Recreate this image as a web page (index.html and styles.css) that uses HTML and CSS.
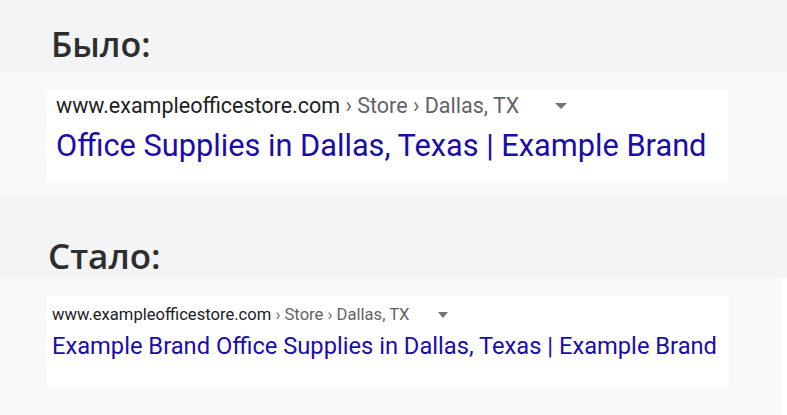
FILE: index.html
```html
<!DOCTYPE html>
<html lang="ru">
<head>
<meta charset="utf-8">
<link rel="stylesheet" href="styles.css">
</head>
<body>
<section class="head head-1"><h2 class="label">Было:</h2></section>
<section class="panel panel-1">
  <div class="card card-1">
    <div class="url"><span class="host">www.exampleofficestore.com</span><span class="crumbs"> › Store › Dallas, TX</span><span class="caret"></span></div>
    <div class="title">Office Supplies in Dallas, Texas | Example Brand</div>
  </div>
</section>
<section class="head head-2"><h2 class="label">Стало:</h2></section>
<section class="panel panel-2">
  <div class="card card-2">
    <div class="url"><span class="host">www.exampleofficestore.com</span><span class="crumbs"> › Store › Dallas, TX</span><span class="caret"></span></div>
    <div class="title">Example Brand Office Supplies in Dallas, Texas | Example Brand</div>
  </div>
</section>
</body>
</html>
```
FILE: styles.css
```css
html, body { margin: 0; padding: 0; background: #ffffff; }
body { width: 787px; height: 415px; overflow: hidden; display: flex; flex-direction: column; font-family: Roboto, "Liberation Sans", sans-serif; }
.head { background: #f3f4f6; display: flex; align-items: flex-end; }
.head-1 { height: 72px; }
.head-2 { height: 82px; }
.label { margin: 0; font-family: "Open Sans", sans-serif; font-weight: 600; color: #2e2e2e; font-size: 34px; line-height: 40px; }
.head-1 .label { padding: 0 0 8px 51px; }
.head-2 .label { padding: 0 0 2px 48px; font-size: 35px; }
.panel { background: #f8f9fb; }
.panel-1 { height: 124px; padding: 18px 0 0 46px; box-sizing: border-box; }
.panel-2 { width: 781px; flex: 1; padding: 17px 0 0 46px; box-sizing: border-box; }
.card { background: #ffffff; box-sizing: border-box; }
.card-1 { width: 682px; height: 93px; padding: 4px 0 0 10px; }
.card-2 { width: 683px; height: 93px; padding: 10px 0 0 6px; }
.url { display: flex; align-items: center; white-space: pre; }
.host { color: #202124; }
.crumbs { color: #5f6368; }
.caret { width: 0; height: 0; border-left: 6px solid transparent; border-right: 6px solid transparent; border-top: 6px solid #70757a; }
.card-1 .url { font-size: 21.5px; line-height: 24px; }
.card-1 .caret { margin-left: 36px; }
.card-2 .url { font-size: 16.6px; line-height: 20px; }
.card-2 .caret { margin-left: 28px; border-left-width: 5px; border-right-width: 5px; border-top-width: 6px; }
.title { color: #1a0dab; white-space: nowrap; }
.card-1 .title { font-size: 30.75px; line-height: 36px; margin-top: 10px; }
.card-2 .title { font-size: 23.7px; line-height: 30px; margin-top: 6px; }
```
